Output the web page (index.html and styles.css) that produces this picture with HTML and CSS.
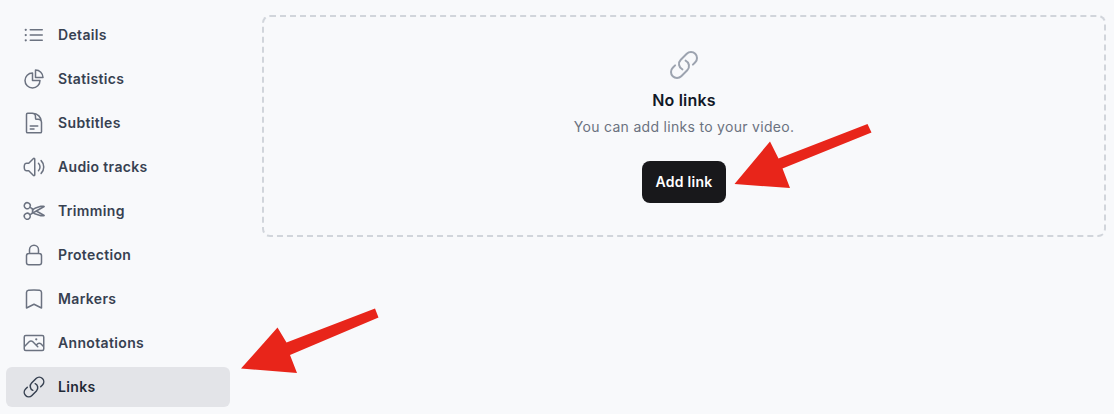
FILE: index.html
```html
<!DOCTYPE html>
<html lang="en">
<head>
  <meta charset="UTF-8">
  <meta name="viewport" content="width=device-width, initial-scale=1.0">
  <title>Links</title>
  <link rel="stylesheet" href="styles.css">
</head>
<body>
  <div class="page">
    <nav class="sidebar">
      <a class="nav-item">
        <svg class="icon" viewBox="0 0 24 24"><path d="M8.25 6.75h12M8.25 12h12m-12 5.25h12M3.75 6.75h.007v.008H3.75V6.75Zm.375 0a.375.375 0 1 1-.75 0 .375.375 0 0 1 .75 0ZM3.75 12h.007v.008H3.75V12Zm.375 0a.375.375 0 1 1-.75 0 .375.375 0 0 1 .75 0Zm-.375 5.25h.007v.008H3.75v-.008Zm.375 0a.375.375 0 1 1-.75 0 .375.375 0 0 1 .75 0Z"/></svg>
        <span class="nav-label">Details</span>
      </a>
      <a class="nav-item">
        <svg class="icon" viewBox="0 0 24 24"><path d="M10.5 6a7.5 7.5 0 1 0 7.5 7.5h-7.5V6Z"/><path d="M13.5 10.5H21A7.5 7.5 0 0 0 13.5 3v7.5Z"/></svg>
        <span class="nav-label">Statistics</span>
      </a>
      <a class="nav-item">
        <svg class="icon" viewBox="0 0 24 24"><path d="M19.5 14.25v-2.625a3.375 3.375 0 0 0-3.375-3.375h-1.5A1.125 1.125 0 0 1 13.5 7.125v-1.5a3.375 3.375 0 0 0-3.375-3.375H8.25m0 12.75h7.5m-7.5 3H12M10.5 2.25H5.625c-.621 0-1.125.504-1.125 1.125v17.25c0 .621.504 1.125 1.125 1.125h12.75c.621 0 1.125-.504 1.125-1.125V11.25a9 9 0 0 0-9-9Z"/></svg>
        <span class="nav-label">Subtitles</span>
      </a>
      <a class="nav-item">
        <svg class="icon" viewBox="0 0 24 24"><path d="M19.114 5.636a9 9 0 0 1 0 12.728M16.463 8.288a5.25 5.25 0 0 1 0 7.424M6.75 8.25l4.72-4.72a.75.75 0 0 1 1.28.53v15.88a.75.75 0 0 1-1.28.53l-4.72-4.72H4.51c-.88 0-1.704-.507-1.938-1.354A9.009 9.009 0 0 1 2.25 12c0-.83.112-1.633.322-2.396C2.806 8.756 3.63 8.25 4.51 8.25H6.75Z"/></svg>
        <span class="nav-label">Audio tracks</span>
      </a>
      <a class="nav-item">
        <svg class="icon" viewBox="0 0 24 24"><path d="m7.848 8.25 1.536.887M7.848 8.25a3 3 0 1 1-5.196-3 3 3 0 0 1 5.196 3Zm1.536.887a2.165 2.165 0 0 1 1.083 1.839c.005.351.054.695.14 1.024M9.384 9.137l2.077 1.199M7.848 15.75l1.536-.887m-1.536.887a3 3 0 1 1-5.196 3 3 3 0 0 1 5.196-3Zm1.536-.887a2.165 2.165 0 0 0 1.083-1.838c.005-.352.054-.695.14-1.025m-1.223 2.863 2.077-1.199m0-3.328a4.323 4.323 0 0 1 2.068-1.379l5.325-1.628a4.5 4.5 0 0 1 2.48-.044l.803.215-7.794 4.5m-2.882-1.664A4.33 4.33 0 0 0 10.607 12m3.736 0 7.794 4.5-.802.215a4.5 4.5 0 0 1-2.48-.043l-5.326-1.629a4.324 4.324 0 0 1-2.068-1.379M14.343 12l-2.882 1.664"/></svg>
        <span class="nav-label">Trimming</span>
      </a>
      <a class="nav-item">
        <svg class="icon" viewBox="0 0 24 24"><path d="M16.5 10.5V6.75a4.5 4.5 0 1 0-9 0v3.75m-.75 11.25h10.5a2.25 2.25 0 0 0 2.25-2.25v-6.75a2.25 2.25 0 0 0-2.25-2.25H6.75a2.25 2.25 0 0 0-2.25 2.25v6.75a2.25 2.25 0 0 0 2.25 2.25Z"/></svg>
        <span class="nav-label">Protection</span>
      </a>
      <a class="nav-item">
        <svg class="icon" viewBox="0 0 24 24"><path d="M17.593 3.322c1.1.128 1.907 1.077 1.907 2.185V21L12 17.25 4.5 21V5.507c0-1.108.806-2.057 1.907-2.185a48.507 48.507 0 0 1 11.186 0Z"/></svg>
        <span class="nav-label">Markers</span>
      </a>
      <a class="nav-item">
        <svg class="icon" viewBox="0 0 24 24"><path d="m2.25 15.75 5.159-5.159a2.25 2.25 0 0 1 3.182 0l5.159 5.159m-1.5-1.5 1.409-1.409a2.25 2.25 0 0 1 3.182 0l2.909 2.909m-18 3.75h16.5a1.5 1.5 0 0 0 1.5-1.5V6a1.5 1.5 0 0 0-1.5-1.5H3.75A1.5 1.5 0 0 0 2.25 6v12a1.5 1.5 0 0 0 1.5 1.5Zm10.5-11.25h.008v.008h-.008V8.25Zm.375 0a.375.375 0 1 1-.75 0 .375.375 0 0 1 .75 0Z"/></svg>
        <span class="nav-label">Annotations</span>
      </a>
      <a class="nav-item active">
        <svg class="icon" viewBox="0 0 24 24"><path d="M13.19 8.688a4.5 4.5 0 0 1 1.242 7.244l-4.5 4.5a4.5 4.5 0 0 1-6.364-6.364l1.757-1.757m13.35-.622 1.757-1.757a4.5 4.5 0 0 0-6.364-6.364l-4.5 4.5a4.5 4.5 0 0 0 1.242 7.244"/></svg>
        <span class="nav-label">Links</span>
      </a>
    </nav>

    <main class="content">
      <div class="empty">
        <svg class="empty-icon" viewBox="0 0 24 24"><path d="M13.19 8.688a4.5 4.5 0 0 1 1.242 7.244l-4.5 4.5a4.5 4.5 0 0 1-6.364-6.364l1.757-1.757m13.35-.622 1.757-1.757a4.5 4.5 0 0 0-6.364-6.364l-4.5 4.5a4.5 4.5 0 0 0 1.242 7.244"/></svg>
        <h3 class="empty-title">No links</h3>
        <p class="empty-text">You can add links to your video.</p>
        <button class="add-btn">Add link</button>
      </div>
    </main>
  </div>

  <!-- annotation arrows drawn over the screenshot -->
  <svg class="arrows" viewBox="0 0 1114 414">
    <polygon points="375,308.5 378.5,317.5 290,355 297,373 241,368.5 277.5,327.5 286.5,342.5"/>
    <polygon points="867.5,124 871.5,132.5 782.5,168.5 790,188 734.5,184 770,141.5 778.5,158.5"/>
  </svg>
</body>
</html>
```

FILE: styles.css
```css
* { box-sizing: border-box; }
html, body { height: 100%; }
body { margin: 0; background: #f8f9fb; font-family: Inter, "Liberation Sans", sans-serif; overflow: hidden; position: relative; }

.page { display: flex; padding: 15px 8px 0 6px; gap: 32px; }

.sidebar { width: 224px; flex-shrink: 0; display: flex; flex-direction: column; gap: 4px; }
.nav-item { height: 40px; display: flex; align-items: center; gap: 12px; padding: 0 16px; border-radius: 6px; font-size: 14px; font-weight: 600; letter-spacing: 0.35px; color: #374151; }
.nav-item.active { background: #e3e4e8; color: #1f2937; }
.nav-label { padding-bottom: 2px; }
.icon { width: 24px; height: 24px; flex-shrink: 0; fill: none; stroke: #6b7280; stroke-width: 1.5; stroke-linecap: round; stroke-linejoin: round; }
.nav-item.active .icon { stroke: #374151; }

.content { flex: 1; }
.empty { height: 222px; border: 2px dashed #d1d5db; border-radius: 8px; padding-top: 32px; display: flex; flex-direction: column; align-items: center; }
.empty-icon { width: 32px; height: 32px; fill: none; stroke: #9ca3af; stroke-width: 1.5; stroke-linecap: round; stroke-linejoin: round; }
.empty-title { margin: 7px 0 0; font-size: 16px; line-height: 24px; font-weight: 600; letter-spacing: 0.2px; color: #111827; }
.empty-text { margin: 5px 0 0; font-size: 14px; line-height: 20px; letter-spacing: 0.3px; color: #6b7280; }
.add-btn { margin-top: 24px; height: 42px; padding: 0 13px 2px; border: none; border-radius: 8px; background: #18181b; color: #fff; font-family: inherit; font-size: 14px; font-weight: 600; letter-spacing: 0.3px; }

.arrows { position: absolute; left: 0; top: 0; width: 1114px; height: 414px; fill: #e8251a; pointer-events: none; }
```
